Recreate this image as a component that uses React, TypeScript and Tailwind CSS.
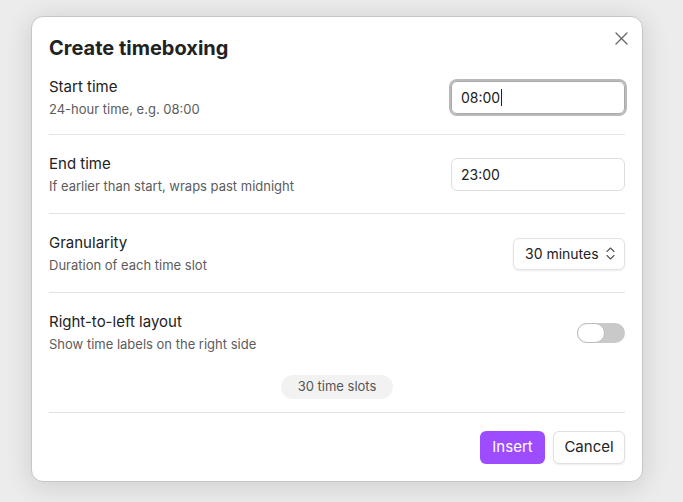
const font = { fontFamily: "Inter, 'Noto Sans', sans-serif" }

const SettingRow = ({
    name,
    desc,
    children,
    first = false,
    last = false,
}: {
    name: string
    desc: string
    children: React.ReactNode
    first?: boolean
    last?: boolean
}) => (
    <div
        className={`flex items-center justify-between ${first ? "pt-[17px] pb-[16px]" : "pt-[19px] pb-[18px]"} ${last ? "" : "border-b border-[#e3e3e3]"}`}
    >
        <div className="flex flex-col gap-[3px]">
            <div className="text-[15px] leading-[20px] text-[#222]">{name}</div>
            <div className="text-[13px] leading-[18px] text-[#5c5c5c]">{desc}</div>
        </div>
        {children}
    </div>
)

export default function App() {
    return (
        <div className="h-[502px] w-full bg-[#ececec] pt-[16px] pl-[31px]" style={font}>
            <div className="relative w-[612px] rounded-[12px] border border-[#c6c6c6] bg-white px-[17px] pt-[19px] pb-[17px] shadow-[0_4px_28px_rgba(0,0,0,0.14)]">
                <button className="absolute right-[8px] top-[8px] flex h-[26px] w-[26px] items-center justify-center text-[#666]">
                    <svg width="13" height="13" viewBox="0 0 13 13" fill="none" stroke="currentColor" strokeWidth="1.3" strokeLinecap="round">
                        <path d="M1 1 12 12M12 1 1 12" />
                    </svg>
                </button>

                <h1 className="text-[20px] font-bold leading-[24px] text-[#222]">Create timeboxing</h1>

                <SettingRow name="Start time" desc="24-hour time, e.g. 08:00" first>
                    <div className="flex h-[33px] w-[174px] items-center rounded-[6px] border border-[#a9a9a9] px-[9px] text-[14px] text-[#222] shadow-[0_0_0_2px_#bababa]">
                        08:00
                        <span className="ml-[1px] h-[17px] w-px bg-[#222]" />
                    </div>
                </SettingRow>

                <SettingRow name="End time" desc="If earlier than start, wraps past midnight">
                    <div className="flex h-[33px] w-[174px] items-center rounded-[6px] border border-[#dedede] px-[9px] text-[14px] text-[#222]">
                        23:00
                    </div>
                </SettingRow>

                <SettingRow name="Granularity" desc="Duration of each time slot">
                    <div className="flex h-[32px] w-[112px] items-center justify-between rounded-[6px] border border-[#e2e2e2] pl-[11px] pr-[9px] text-[14px] text-[#222] shadow-[0_1px_2px_rgba(0,0,0,0.08)]">
                        30 minutes
                        <svg width="9" height="13" viewBox="0 0 9 13" fill="none" stroke="#555" strokeWidth="1.1" strokeLinecap="round" strokeLinejoin="round">
                            <path d="M1 4.5 4.5 1 8 4.5M1 8.5 4.5 12 8 8.5" />
                        </svg>
                    </div>
                </SettingRow>

                <SettingRow name="Right-to-left layout" desc="Show time labels on the right side" last>
                    <div className="flex h-[20px] w-[48px] items-center rounded-full bg-[#c9c9c9]">
                        <div className="h-[20px] w-[28px] rounded-full border border-[#bdbdbd] bg-white" />
                    </div>
                </SettingRow>

                <div className="mt-[4px] mb-[13px] flex justify-center">
                    <span className="flex h-[24px] w-[112px] items-center justify-center rounded-full bg-[#f2f2f2] text-[13px] text-[#555]">
                        30 time slots
                    </span>
                </div>

                <div className="flex justify-end gap-[8px] border-t border-[#e0e0e0] pt-[18px]">
                    <button className="h-[33px] w-[65px] rounded-[6px] bg-[#9e4cff] text-[15px] text-white">Insert</button>
                    <button className="h-[33px] w-[72px] rounded-[6px] border border-[#e0e0e0] bg-white text-[15px] text-[#222] shadow-[0_1px_2px_rgba(0,0,0,0.08)]">
                        Cancel
                    </button>
                </div>
            </div>
        </div>
    )
}
